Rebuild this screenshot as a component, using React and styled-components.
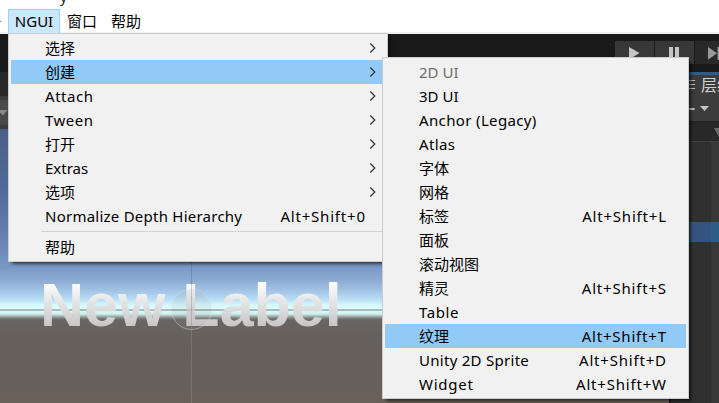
import React from "react";
import styled, { createGlobalStyle } from "styled-components";

const GlobalStyle = createGlobalStyle`
  * { box-sizing: border-box; }
  body { margin: 0; overflow: hidden; }
`;

const Window = styled.div`
  position: relative;
  display: flex;
  flex-direction: column;
  width: 719px;
  height: 403px;
  overflow: hidden;
  background: #191919;
  color: #000;
  font: 15px/24px "Noto Sans", "Noto Sans CJK SC", sans-serif;
`;

const TitleStrip = styled.div`
  height: 9px;
  flex: none;
  overflow: hidden;
  background: #fff;
  padding-left: 60px;
  font-size: 14px;
  line-height: 9px;
  color: #222;
  span { display: block; margin-top: -8px; }
`;

const MenuBar = styled.nav`
  display: flex;
  flex: none;
  height: 25px;
  background: #fff;
  border-bottom: 2px solid #f0f0f0;
`;

const MenuBarEdge = styled.span`
  width: 8px;
  padding-top: 12px;
  &::before { content: ""; display: block; width: 1px; height: 1px; background: #4682c4; }
`;

const MenuBarItem = styled.span`
  height: 25px;
  width: ${(p) => p.$width}px;
  text-align: center;
  line-height: 22px;
  border: 1px solid ${(p) => (p.$open ? "#99d1ff" : "transparent")};
  background: ${(p) => (p.$open ? "#cce8ff" : "transparent")};
  margin-right: ${(p) => p.$gap || 0}px;
`;

const PlayBar = styled.div`
  display: flex;
  flex: none;
  height: 38px;
  padding: 7px 0 0 615px;
  gap: 1px;
  background: #191919;
`;

const PlayButton = styled.div`
  display: flex;
  flex: none;
  width: 39px;
  height: 23px;
  background: ${(p) => (p.$dim ? "#292929" : "#383838")};
  svg { display: block; }
`;

const Workspace = styled.div`
  display: flex;
  flex: 1;
  min-height: 0;
`;

const ScenePane = styled.section`
  display: flex;
  flex-direction: column;
  width: 669px;
  margin-right: 2px;
`;

const SceneTabs = styled.div`
  height: 24px;
  background: #282828;
`;

const SceneTools = styled.div`
  height: 33px;
  border-top: 4px solid #3c3c3c;
  border-bottom: 4px solid #3c3c3c;
  background: #4a4a4a;
  padding-top: 10px;
  svg { display: block; }
`;

const Scene = styled.div`
  position: relative;
  flex: 1;
  overflow: hidden;
  background: linear-gradient(
    #4a5f88 0, #526b99 65px, #6884b3 112px, #7897c4 138px, #8eadd5 152px, #a5c7e9 163px,
    #bce0f5 171px, #d5f8fd 176px, #dcffff 181px, #cfeeee 185px, #a9b9b5 187px,
    #7e8481 189px, #696563 191px, #65605b 210px, #67605a 250px, #696059 274px
  );
`;

const SceneLabel = styled.div`
  position: absolute;
  left: 40px;
  top: 142px;
  font: bold 61px/68px "Liberation Sans", sans-serif;
  white-space: nowrap;
  background: linear-gradient(#fdfdfd 12px, #c4c4c4 57px);
  background-clip: text;
  -webkit-background-clip: text;
  color: transparent;
`;

const Gizmo = styled.svg`
  position: absolute;
  left: 0;
  top: 0;
`;

const Hierarchy = styled.section`
  display: flex;
  flex-direction: column;
  width: 48px;
  overflow: hidden;
  background: #303030;
`;

const HierarchyTab = styled.header`
  display: flex;
  height: 24px;
  border-top: 3px solid #2c5d87;
  background: #3c3c3c;
  color: #d2d2d2;
  font-size: 16px;
  line-height: 20px;
  white-space: nowrap;
  svg { flex: none; margin-right: 5px; }
`;

const HierarchyTools = styled.div`
  height: 26px;
  background: #3c3c3c;
  border-bottom: 1px solid #232323;
  svg { display: block; }
`;

const HierarchyScene = styled.div`
  height: 20px;
  background: #292929;
  border-bottom: 1px solid #404040;
  svg { display: block; }
`;

const HierarchyRow = styled.div`
  flex: ${(p) => (p.$fill ? 1 : "none")};
  height: ${(p) => p.$height}px;
  background: linear-gradient(
    90deg,
    ${(p) => (p.$selected ? "#34547f 40px, #2c5d87 40px" : "#303030 40px, #383838 40px")}
  );
`;

const Popup = styled.div`
  position: absolute;
  left: ${(p) => p.$x}px;
  top: ${(p) => p.$y}px;
  width: ${(p) => p.$width}px;
  padding: 2px;
  border: 1px solid #ccc;
  background: #f1f1f1;
  box-shadow: 3px 3px 3px -1px rgba(0, 0, 0, 0.6);
`;

const Row = styled.div`
  display: flex;
  align-items: center;
  height: 24px;
  padding: 0 ${(p) => (p.$sub ? 8 : 20)}px 0 34px;
  background: ${(p) => (p.$active ? "#91c9f7" : "transparent")};
  color: ${(p) => (p.$disabled ? "#6d6d6d" : "#000")};
  white-space: nowrap;
`;

const RowLabel = styled.span`
  flex: 1;
  letter-spacing: ${(p) => p.$track || 0}px;
`;

const Shortcut = styled.span`
  letter-spacing: 0.8px;
  margin-right: -0.8px;
`;

const Separator = styled.hr`
  height: 1px;
  margin: 3px 2px 3px 30px;
  border: 0;
  background: #d3d3d3;
`;

const Chevron = () => (
  <svg width="9" height="12" viewBox="0 0 9 12">
    <path d="M2.3 1.5 L6.8 6 L2.3 10.5" fill="none" stroke="#333" strokeWidth="1.2" />
  </svg>
);

const nguiMenu = [
  { label: "选择", sub: true },
  { label: "创建", sub: true, active: true },
  { label: "Attach", sub: true, track: 0.55 },
  { label: "Tween", sub: true, track: 0.5 },
  { label: "打开", sub: true },
  { label: "Extras", sub: true },
  { label: "选项", sub: true },
  { label: "Normalize Depth Hierarchy", shortcut: "Alt+Shift+0", track: 0.24 },
  { separator: true },
  { label: "帮助" },
];

const createMenu = [
  { label: "2D UI", disabled: true },
  { label: "3D UI" },
  { label: "Anchor (Legacy)", track: 0.36 },
  { label: "Atlas", track: 0.35 },
  { label: "字体" },
  { label: "网格" },
  { label: "标签", shortcut: "Alt+Shift+L" },
  { label: "面板" },
  { label: "滚动视图" },
  { label: "精灵", shortcut: "Alt+Shift+S" },
  { label: "Table", track: 0.6 },
  { label: "纹理", shortcut: "Alt+Shift+T", active: true },
  { label: "Unity 2D Sprite", shortcut: "Alt+Shift+D", track: 0.28 },
  { label: "Widget", shortcut: "Alt+Shift+W", track: 0.75 },
];

const Menu = ({ x, y, width, items }) => (
  <Popup $x={x} $y={y} $width={width}>
    {items.map((it, i) =>
      it.separator ? (
        <Separator key={i} />
      ) : (
        <Row key={i} $active={it.active} $disabled={it.disabled} $sub={it.sub}>
          <RowLabel $track={it.track}>{it.label}</RowLabel>
          {it.shortcut && <Shortcut>{it.shortcut}</Shortcut>}
          {it.sub && <Chevron />}
        </Row>
      )
    )}
  </Popup>
);

export default function App() {
  return (
    <Window>
      <GlobalStyle />
      <TitleStrip><span>y</span></TitleStrip>
      <MenuBar>
        <MenuBarEdge />
        <MenuBarItem $open $width={52} $gap={1}>NGUI</MenuBarItem>
        <MenuBarItem $width={42} $gap={2}>窗口</MenuBarItem>
        <MenuBarItem $width={42}>帮助</MenuBarItem>
      </MenuBar>
      <PlayBar>
        <PlayButton>
          <svg width="39" height="23"><path d="M14 6 L24.5 12 L14 18.5Z" fill="#c4c4c4" /></svg>
        </PlayButton>
        <PlayButton>
          <svg width="39" height="23"><path d="M14 6h4v13h-4zM20 6h4v13h-4z" fill="#c4c4c4" /></svg>
        </PlayButton>
        <PlayButton $dim>
          <svg width="39" height="23"><path d="M13 6 L22 12.3 L13 18.7ZM22.5 6h2v13h-2z" fill="#9a9a9a" /></svg>
        </PlayButton>
      </PlayBar>
      <Workspace>
        <ScenePane>
          <SceneTabs />
          <SceneTools>
            <svg width="8" height="6"><path d="M-2 0h9.5L2.8 5.5Z" fill="#888" /></svg>
          </SceneTools>
          <Scene>
            <Gizmo width="669" height="274">
              <path d="M191.5 0V274" stroke="#fff" strokeOpacity=".13" />
              <path d="M191.5 132V181" stroke="#555" strokeOpacity=".4" />
              <path d="M0 181H669" stroke="#777" strokeOpacity=".5" strokeWidth="2" />
            </Gizmo>
            <SceneLabel>New Label</SceneLabel>
            <Gizmo width="669" height="274">
              <circle cx="191.5" cy="180.5" r="20" fill="#999" fillOpacity=".12" stroke="#ddd" strokeOpacity=".45" />
              <path d="M191.5 154V201M171 181H212" stroke="#777" strokeOpacity=".35" />
            </Gizmo>
          </Scene>
        </ScenePane>
        <Hierarchy>
          <HierarchyTab>
            <svg width="25" height="21"><path d="M14 5.5H24M14 9.5H24M14 13.5H24" stroke="#bbb" /></svg>
            层级
          </HierarchyTab>
          <HierarchyTools>
            <svg width="48" height="25"><path d="M14 12h9.5v2H14zM29 10h9l-4.5 5Z" fill="#c4c4c4" /></svg>
          </HierarchyTools>
          <HierarchyScene>
            <svg width="48" height="19"><path d="M43 6h10l-5 9Z" fill="#6c6c6c" /></svg>
          </HierarchyScene>
          <HierarchyRow $height={80} />
          <HierarchyRow $height={20} $selected />
          <HierarchyRow $fill />
        </Hierarchy>
      </Workspace>
      <Menu x={8} y={33} width={380} items={nguiMenu} />
      <Menu x={382} y={57} width={307} items={createMenu} />
    </Window>
  );
}
